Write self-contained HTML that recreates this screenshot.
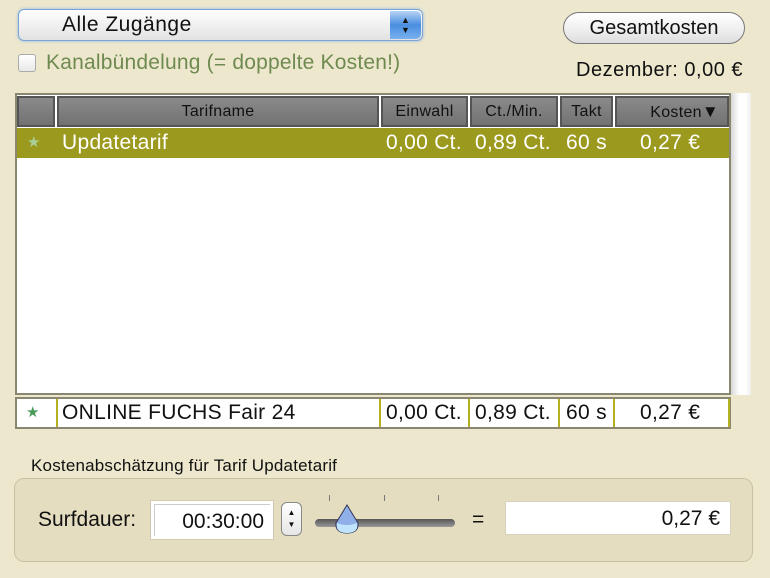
<!DOCTYPE html>
<html><head><meta charset="utf-8"><style>
*{margin:0;padding:0;box-sizing:border-box}
body{width:770px;height:578px;background:#ede8cd;font-family:"Liberation Sans",sans-serif;position:relative;overflow:hidden;font-size:18px;color:#111}
.a{position:absolute;white-space:nowrap}
.hd{position:absolute;top:96px;height:31px;background:linear-gradient(#8a8a8a,#727272);border:2px solid #555;color:#111;font-size:16px;line-height:27px;text-align:center;letter-spacing:0.3px;white-space:nowrap;overflow:hidden}
.r{position:absolute;line-height:28px;font-size:21px;letter-spacing:0.3px;white-space:nowrap}
.sep{position:absolute;top:399px;height:28px;width:2px;background:#b5b020}
</style></head><body>
<div class="a" style="left:18px;top:9px;width:405px;height:32px;border-radius:6px;border:1px solid #7aa3d6;box-shadow:0 0 3px #8fb6e8;background:linear-gradient(#fff,#f0f0f0 50%,#e2e2e2)"></div>
<div class="a" style="left:62px;top:11px;font-size:21px;line-height:28px;letter-spacing:0.5px">Alle Zugänge</div>
<div class="a" style="left:390px;top:11px;width:31px;height:28px;border-radius:0 5px 5px 0;background:linear-gradient(#b7d4f5,#4a8ee0 50%,#79b1ee);font-size:9px;color:#111;text-align:center;line-height:10px;padding-top:4px">▲<br>▼</div>
<div class="a" style="left:563px;top:12px;width:182px;height:32px;border-radius:16px;border:1px solid #777;background:linear-gradient(#fff,#f1f1f1 50%,#ddd);text-align:center;line-height:30px;font-size:20px">Gesamtkosten</div>
<div class="a" style="left:18px;top:54px;width:18px;height:18px;border:1px solid #aaa;border-radius:3px;background:linear-gradient(#fff,#e8e8e8)"></div>
<div class="a" style="left:46px;top:50px;font-size:21px;color:#6f8a50;line-height:26px;letter-spacing:0.2px">Kanalbündelung (= doppelte Kosten!)</div>
<div class="a" style="right:27px;top:57px;font-size:20px;line-height:26px;letter-spacing:0.5px">Dezember: 0,00 €</div>
<div class="a" style="left:731px;top:93px;width:20px;height:302px;background:linear-gradient(90deg,#d8d8d8,#fff 40%,#fff 70%,#eee)"></div>
<div class="a" style="left:15px;top:93px;width:716px;height:302px;border:2px solid #8a8770;background:#fff"></div>
<div class="hd" style="left:17px;width:38px"></div>
<div class="hd" style="left:57px;width:322px">Tarifname</div>
<div class="hd" style="left:381px;width:87px">Einwahl</div>
<div class="hd" style="left:470px;width:88px">Ct./Min.</div>
<div class="hd" style="left:560px;width:53px">Takt</div>
<div class="hd" style="left:615px;width:114px;text-align:right;padding-right:8px">Kosten<span style="font-size:17px">▼</span></div>
<div class="a" style="left:17px;top:128px;width:712px;height:30px;background:#9c9a1e"></div>
<div class="r" style="left:27px;top:129px;color:#a8d098;font-size:15px">★</div>
<div class="r" style="left:62px;top:129px;color:#fff">Updatetarif</div>
<div class="r" style="left:386px;top:129px;color:#fff">0,00 Ct.</div>
<div class="r" style="left:475px;top:129px;color:#fff">0,89 Ct.</div>
<div class="r" style="left:566px;top:129px;color:#fff">60 s</div>
<div class="r" style="left:640px;top:129px;color:#fff">0,27 €</div>
<div class="a" style="left:15px;top:397px;width:716px;height:32px;border:2px solid #8a8770;background:#fff"></div>
<div class="sep" style="left:56px"></div><div class="sep" style="left:379px"></div><div class="sep" style="left:468px"></div><div class="sep" style="left:558px"></div><div class="sep" style="left:613px"></div><div class="sep" style="left:728px"></div>
<div class="r" style="left:26px;top:399px;color:#4a9a5a;font-size:15px">★</div>
<div class="r" style="left:62px;top:399px">ONLINE FUCHS Fair 24</div>
<div class="r" style="left:386px;top:399px">0,00 Ct.</div>
<div class="r" style="left:475px;top:399px">0,89 Ct.</div>
<div class="r" style="left:566px;top:399px">60 s</div>
<div class="r" style="left:640px;top:399px">0,27 €</div>
<div class="a" style="left:31px;top:455px;font-size:17px;line-height:22px;letter-spacing:0.2px">Kostenabschätzung für Tarif Updatetarif</div>
<div class="a" style="left:14px;top:478px;width:739px;height:84px;border-radius:10px;border:1px solid #c9c3a4;background:#e4ddc0"></div>
<div class="a" style="left:38px;top:507px;font-size:21px;line-height:26px">Surfdauer:</div>
<div class="a" style="left:150px;top:500px;width:124px;height:40px;border:1px solid #cfcab0;background:#fff;padding:3px"><div style="border-left:1px solid #ccc;border-top:1px solid #ccc;height:100%;text-align:right;padding-right:6px;line-height:33px;font-size:21px">00:30:00</div></div>
<div class="a" style="left:281px;top:502px;width:21px;height:34px;border:1px solid #888;border-radius:6px;background:linear-gradient(#fff,#e6e6e6);font-size:8px;text-align:center;line-height:12px;padding-top:4px">▲<br>▼</div>
<div class="a" style="left:329px;top:495px;width:1px;height:6px;background:#777"></div>
<div class="a" style="left:384px;top:495px;width:1px;height:6px;background:#777"></div>
<div class="a" style="left:438px;top:495px;width:1px;height:6px;background:#777"></div>
<div class="a" style="left:315px;top:519px;width:140px;height:8px;border-radius:4px;background:linear-gradient(#555,#999);"></div>
<svg class="a" style="left:333px;top:503px" width="28" height="32"><path d="M14 2 L25 20 Q26 30 14 30 Q2 30 3 20 Z" fill="#8fb0e8" stroke="#335" stroke-width="1"/><path d="M4 20 Q14 24 24 20 Q26 30 14 30 Q2 30 4 20Z" fill="#bfe4fb"/></svg>
<div class="a" style="left:472px;top:507px;font-size:21px;line-height:26px">=</div>
<div class="a" style="left:505px;top:501px;width:226px;height:34px;background:#fff;border:1px solid #d8d3b8;text-align:right;padding-right:10px;line-height:34px;font-size:21px">0,27 €</div>
</body></html>
